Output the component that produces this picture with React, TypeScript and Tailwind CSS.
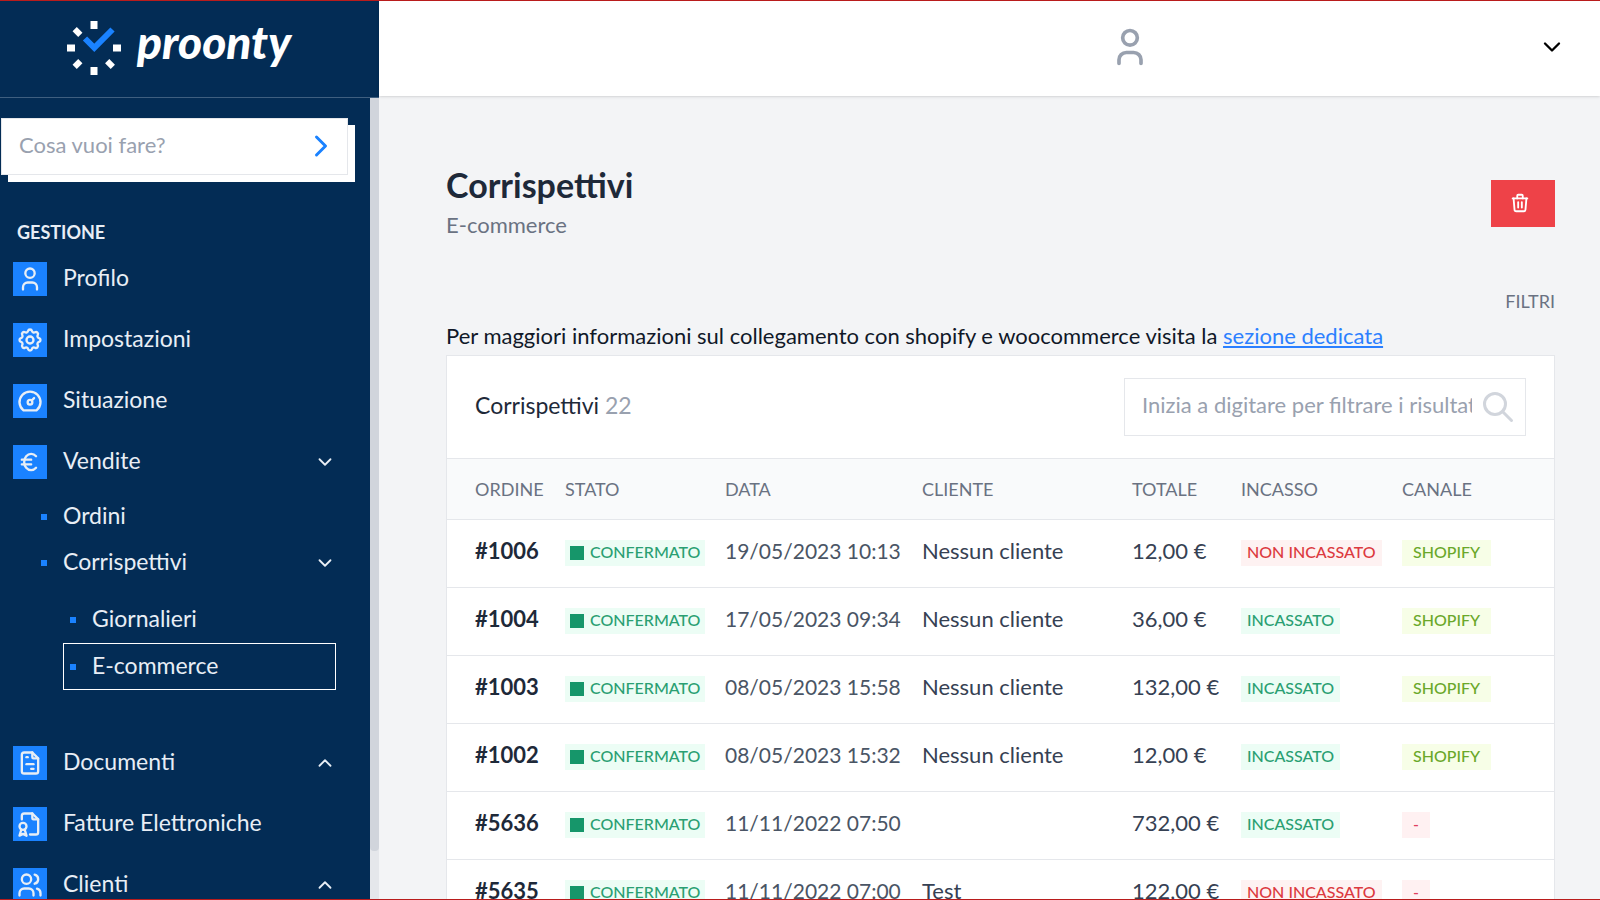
import type { ReactNode } from 'react';
import type { IconType } from 'react-icons';
import {
  TbChevronDown,
  TbChevronRight,
  TbChevronUp,
  TbCurrencyEuro,
  TbDashboard,
  TbFileCertificate,
  TbFileInvoice,
  TbSearch,
  TbSettings,
  TbTrash,
  TbUser,
  TbUsers,
} from 'react-icons/tb';

type Order = {
  id: string;
  date: string;
  customer: string;
  total: string;
  paid: boolean;
  channel: string | null;
};

const orders: Order[] = [
  { id: '#1006', date: '19/05/2023 10:13', customer: 'Nessun cliente', total: '12,00 €', paid: false, channel: 'SHOPIFY' },
  { id: '#1004', date: '17/05/2023 09:34', customer: 'Nessun cliente', total: '36,00 €', paid: true, channel: 'SHOPIFY' },
  { id: '#1003', date: '08/05/2023 15:58', customer: 'Nessun cliente', total: '132,00 €', paid: true, channel: 'SHOPIFY' },
  { id: '#1002', date: '08/05/2023 15:32', customer: 'Nessun cliente', total: '12,00 €', paid: true, channel: 'SHOPIFY' },
  { id: '#5636', date: '11/11/2022 07:50', customer: '', total: '732,00 €', paid: true, channel: null },
  { id: '#5635', date: '11/11/2022 07:00', customer: 'Test', total: '122,00 €', paid: false, channel: null },
];

function Logo() {
  return (
    <a href="#" className="flex items-center gap-4 text-white">
      <svg viewBox="0 0 54 54" className="h-[54px] w-[54px] shrink-0" aria-hidden="true">
        <g fill="#fff">
          <rect x="23.5" y="0" width="7" height="8" />
          <rect x="23.5" y="46" width="7" height="8" />
          <rect x="0" y="23.5" width="8" height="7" />
          <rect x="46" y="23.5" width="8" height="7" />
          <rect x="7.5" y="7" width="6" height="8" transform="rotate(-45 10.5 11)" />
          <rect x="7.5" y="39" width="6" height="8" transform="rotate(45 10.5 43)" />
          <rect x="40" y="39" width="6" height="8" transform="rotate(-45 43 43)" />
        </g>
        <path d="M18 17.5 L27.3 26.8 L45.5 8.5" fill="none" stroke="#1a82ff" strokeWidth="6" />
      </svg>
      <span className="pb-3 text-[46px] leading-[54px] font-black italic">proonty</span>
    </a>
  );
}

function MenuItem({ icon: Icon, label, chevron }: { icon: IconType; label: string; chevron?: 'up' | 'down' }) {
  return (
    <a href="#" className="flex h-[61px] items-center pr-[34px] pl-[13px]">
      <span className="grid h-[34px] w-[34px] place-items-center bg-[#1a82ff]">
        <Icon className="h-7 w-7" />
      </span>
      <span className="ml-4 flex-1 pb-1 text-[23px] leading-8">{label}</span>
      {chevron === 'down' && <TbChevronDown className="h-[22px] w-[22px]" />}
      {chevron === 'up' && <TbChevronUp className="h-[22px] w-[22px]" />}
    </a>
  );
}

function SubItem({ label, chevron }: { label: string; chevron?: boolean }) {
  return (
    <a href="#" className="flex h-[46px] items-center pr-[34px] pl-[41px]">
      <span className="h-1.5 w-1.5 bg-[#1a82ff]" />
      <span className="ml-4 flex-1 pb-1 text-[23px] leading-8">{label}</span>
      {chevron && <TbChevronDown className="h-[22px] w-[22px]" />}
    </a>
  );
}

function LeafItem({ label, active }: { label: string; active?: boolean }) {
  return (
    <a href="#" className={`mr-[34px] ml-[63px] flex h-[47px] items-center border pl-1.5 ${active ? 'border-white' : 'border-transparent'}`}>
      <span className="h-1.5 w-1.5 bg-[#1a82ff]" />
      <span className="ml-4 pb-1 text-[23px] leading-8">{label}</span>
    </a>
  );
}

function Badge({ className, children }: { className: string; children: ReactNode }) {
  return (
    <span className={`flex h-[26px] w-fit items-center pb-0.5 text-[16px] leading-6 font-medium whitespace-nowrap ${className}`}>
      {children}
    </span>
  );
}

function Sidebar() {
  return (
    <aside className="flex w-[379px] shrink-0 flex-col bg-[#032c55] text-[#e8eef5]">
      <div className="flex h-[97px] shrink-0 items-center border-b border-[#3f5f80] pb-0.5 pl-[67px]">
        <Logo />
      </div>
      <div className="flex min-h-0 flex-1">
        <nav className="min-w-0 flex-1 overflow-hidden pt-5">
          <form className="mr-[22px] ml-px flex h-[57px] items-center border border-gray-200 bg-white shadow-[7px_7px_0_0_#fff]">
            <input
              type="text"
              aria-label="Cosa vuoi fare?"
              placeholder="Cosa vuoi fare?"
              className="min-w-0 flex-1 pb-1 pl-[17px] text-[22px] leading-8 text-gray-800 outline-none placeholder:text-gray-400"
            />
            <button type="button" aria-label="Vai" className="mr-2 pb-0.5 text-[#1a82ff]">
              <TbChevronRight className="h-9 w-9" />
            </button>
          </form>

          <h2 className="mt-[45px] mb-1 pl-[17px] text-[18px] leading-6 font-bold">GESTIONE</h2>
          <MenuItem icon={TbUser} label="Profilo" />
          <MenuItem icon={TbSettings} label="Impostazioni" />
          <MenuItem icon={TbDashboard} label="Situazione" />
          <MenuItem icon={TbCurrencyEuro} label="Vendite" chevron="down" />
          <div className="mt-0.5 mb-[42px]">
            <SubItem label="Ordini" />
            <SubItem label="Corrispettivi" chevron />
            <div className="mt-2.5">
              <LeafItem label="Giornalieri" />
              <LeafItem label="E-commerce" active />
            </div>
          </div>
          <MenuItem icon={TbFileInvoice} label="Documenti" chevron="up" />
          <MenuItem icon={TbFileCertificate} label="Fatture Elettroniche" />
          <MenuItem icon={TbUsers} label="Clienti" chevron="up" />
        </nav>
        {/* scroll track */}
        <div className="w-[9px] shrink-0 bg-gray-200">
          <div className="h-[94%] rounded-b-sm bg-gray-300" />
        </div>
      </div>
    </aside>
  );
}

function OrdersTable() {
  return (
    <table className="w-full table-fixed border-collapse text-left">
      <colgroup>
        <col className="w-[106px]" />
        <col className="w-[160px]" />
        <col className="w-[197px]" />
        <col />
        <col className="w-[109px]" />
        <col className="w-[161px]" />
        <col className="w-[164px]" />
      </colgroup>
      <thead>
        <tr className="h-[60px] border-b border-gray-200 bg-gray-50 text-[18px] leading-6 text-gray-500">
          <th className="pl-7 font-normal">ORDINE</th>
          <th className="pl-3 font-normal">STATO</th>
          <th className="pl-3 font-normal">DATA</th>
          <th className="pl-3 font-normal">CLIENTE</th>
          <th className="pl-3 font-normal">TOTALE</th>
          <th className="pl-3 font-normal">INCASSO</th>
          <th className="pl-3 font-normal">CANALE</th>
        </tr>
      </thead>
      <tbody>
        {orders.map(o => (
          <tr key={o.id} className="h-[68px] border-b border-gray-200 text-[22px] leading-8 whitespace-nowrap text-gray-700">
            <td className="pb-1 pl-7 font-bold text-gray-800">{o.id}</td>
            <td className="pl-3">
              <Badge className="gap-1.5 bg-emerald-50 px-[5px] text-[#2a9f72]">
                <span className="mt-0.5 h-3.5 w-3.5 bg-[#16966a]" />
                CONFERMATO
              </Badge>
            </td>
            <td className="pb-1 pl-3 text-[21px] text-gray-600">{o.date}</td>
            <td className="pb-1 pl-3">{o.customer}</td>
            <td className="pb-1 pl-3">{o.total}</td>
            <td className="pl-3">
              {o.paid ? (
                <Badge className="bg-emerald-50 px-1.5 text-[#2a9f72]">INCASSATO</Badge>
              ) : (
                <Badge className="bg-red-50 px-1.5 text-[#dc3a40]">NON INCASSATO</Badge>
              )}
            </td>
            <td className="pl-3">
              {o.channel ? (
                <Badge className="bg-lime-50 px-[11px] text-[#6aa82a]">{o.channel}</Badge>
              ) : (
                <Badge className="bg-rose-50 px-[11px] text-[#e0405e]">-</Badge>
              )}
            </td>
          </tr>
        ))}
      </tbody>
    </table>
  );
}

export default function App() {
  return (
    <div className="flex h-screen overflow-hidden border-y border-[#b91c1c] bg-gray-100 font-[Lato,'Liberation_Sans',sans-serif] text-gray-900">
      <Sidebar />
      <div className="flex min-w-0 flex-1 flex-col">
        <header className="z-10 flex h-[95px] shrink-0 items-center justify-end bg-white pr-[34px] pb-[3px] shadow">
          <button type="button" aria-label="Account" className="flex w-[458px] items-center justify-between">
            <TbUser className="h-11 w-11 text-gray-400" />
            <TbChevronDown className="h-7 w-7 text-black" />
          </button>
        </header>

        <main className="min-h-0 flex-1 overflow-hidden pr-[45px] pl-[67px] pt-[69px]">
          <div className="flex items-center justify-between">
            <div>
              <h1 className="text-[34px] leading-10 font-bold text-gray-800">Corrispettivi</h1>
              <p className="mt-1 text-[22px] leading-8 text-gray-500">E-commerce</p>
            </div>
            <button type="button" aria-label="Elimina" className="flex h-[47px] w-16 items-center bg-[#ee4248] pl-[18px] text-white">
              <TbTrash className="h-[22px] w-[22px]" />
            </button>
          </div>

          <button type="button" className="mt-12 block w-full text-right text-[18px] leading-6 text-gray-500">
            FILTRI
          </button>

          <p className="mt-[7px] text-[22px] leading-8 text-gray-900">
            Per maggiori informazioni sul collegamento con shopify e woocommerce visita la{' '}
            <a href="#" className="text-blue-500 underline">sezione dedicata</a>
          </p>

          <section className="mt-[3px] border border-gray-200 bg-white">
            <div className="flex h-[103px] items-center justify-between border-b border-gray-200 px-7">
              <h2 className="pb-1 text-[23px] leading-8 text-gray-800">
                Corrispettivi <span className="text-gray-400">22</span>
              </h2>
              <div className="flex h-[58px] w-[402px] items-center border border-gray-200">
                <input
                  type="text"
                  aria-label="Filtra i risultati"
                  placeholder="Inizia a digitare per filtrare i risultati"
                  className="ml-[17px] w-[330px] pb-1 text-[22px] leading-8 outline-none placeholder:text-gray-400"
                />
                <TbSearch className="ml-2 h-9 w-9 text-gray-300" />
              </div>
            </div>
            <OrdersTable />
          </section>
        </main>
      </div>
    </div>
  );
}
